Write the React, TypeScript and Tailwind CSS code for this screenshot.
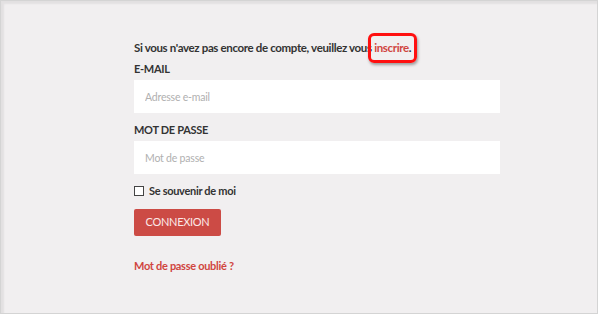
export default function App() {
  return (
    <div className="h-[316px] w-[600px] bg-white font-['Lato',sans-serif]">
      <div className="h-[314px] w-[598px] border border-[#d4d4d4] bg-[#f1eff0] shadow-[inset_3px_3px_2px_rgba(0,0,0,0.06)]">
        <div className="ml-[133px] w-[366px] pt-[39px]">
          <p className="text-[11.5px] leading-[16px] font-bold tracking-[-0.35px] text-[#333]">
            Si vous n'avez pas encore de compte, veuillez vous{" "}
            <span className="relative">
              <a className="text-[#d0453f]">inscrire</a>.
              <span
                className="pointer-events-none absolute -top-[8px] -right-[6px] -bottom-[9px] -left-[6px] rounded-[6px] border-[3px] border-[#ff1010] shadow-[1px_2px_3px_rgba(0,0,0,0.35)]"
                aria-hidden
              />
            </span>
          </p>

          <label className="mt-[6px] block text-[11px] leading-[14px] font-bold tracking-[-0.3px] text-[#333]">E-MAIL</label>
          <input
            className="mt-[4px] block h-[33px] w-full bg-white px-[11px] text-[10.5px] tracking-[-0.2px] outline-none placeholder:text-[#b0b0b0]"
            placeholder="Adresse e-mail"
          />

          <label className="mt-[10px] block text-[11px] leading-[14px] font-bold tracking-[-0.3px] text-[#333]">MOT DE PASSE</label>
          <input
            type="password"
            className="mt-[4px] block h-[33px] w-full bg-white px-[11px] text-[10.5px] tracking-[-0.2px] outline-none placeholder:text-[#b0b0b0]"
            placeholder="Mot de passe"
          />

          <label className="mt-[10px] flex items-center gap-[5px] text-[11px] leading-[14px] font-bold tracking-[-0.3px] text-[#333]">
            <span className="h-[10px] w-[10px] border border-[#444] bg-white" />
            Se souvenir de moi
          </label>

          <button className="mt-[11px] flex h-[27px] w-[87px] items-center justify-center rounded-[2px] bg-[#cc4b45] text-[11px] tracking-[-0.3px] text-[#fbe9e8]">
            CONNEXION
          </button>

          <a className="mt-[23px] block text-[11px] leading-[14px] font-bold tracking-[-0.3px] text-[#d0453f]">Mot de passe oublié ?</a>
        </div>
      </div>
    </div>
  )
}
